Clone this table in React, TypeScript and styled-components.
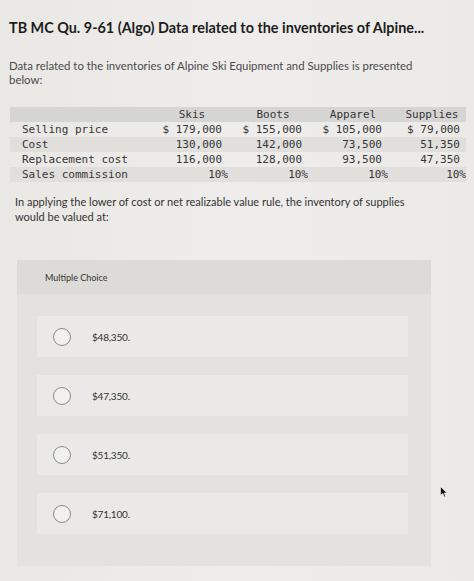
import React from "react";
import styled, { createGlobalStyle } from "styled-components";

const Global = createGlobalStyle`
  html, body { margin: 0; padding: 0; background: #ebeae7; }
  body { width: 474px; height: 581px; overflow: hidden; }
`;

const Page = styled.div`
  position: relative;
  width: 474px;
  height: 581px;
  box-sizing: border-box;
  padding: 19px 9px 0 9px;
  background: linear-gradient(90deg, #e9e8e5 0%, #eeedeb 50%, #ebeae7 100%);
  font-family: Lato, "Open Sans", sans-serif;
  color: #222;
`;

const Title = styled.h1`
  margin: 0;
  font-size: 14.4px;
  line-height: 18px;
  font-weight: 700;
  color: #1d1d1d;
  white-space: nowrap;
`;

const Desc = styled.p`
  margin: 22px 0 0 0;
  font-size: 11.4px;
  line-height: 14px;
  color: #4a4a4a;
  width: 420px;
`;

const Table = styled.div`
  margin: 20px 0 0 1px;
  width: 456px;
  display: grid;
  grid-template-columns: 136px 82px 80px 80px 78px;
  font-family: "DejaVu Sans Mono", "Liberation Mono", monospace;
  font-size: 11px;
  color: #363636;
`;

const Row = styled.div<{ $band?: "head" | "stripe" | "plain" }>`
  display: contents;
  & > div {
    background: ${(p) =>
      p.$band === "head" ? "#d5d5d4" : p.$band === "stripe" ? "#e0dfdc" : "transparent"};
  }
`;

const Cell = styled.div<{ $align?: "left" | "right" | "center"; $pct?: boolean }>`
  height: 15px;
  line-height: 15px;
  white-space: pre;
  text-align: ${(p) => p.$align ?? "right"};
  padding-left: ${(p) => (p.$align === "left" ? "12px" : p.$align === "center" ? "10px" : "0")};
  padding-right: ${(p) => (p.$pct ? "0" : p.$align === "center" ? "0" : "6px")};
`;

const Question = styled.p`
  margin: 12px 0 0 6px;
  font-size: 11px;
  line-height: 15px;
  color: #333;
  width: 400px;
`;

const Panel = styled.section`
  margin: 36px 0 0 8px;
  width: 414px;
  background: #e3e2df;
  padding-bottom: 32px;
`;

const PanelHead = styled.div`
  height: 34px;
  background: #dcdbd8;
  display: flex;
  align-items: center;
  padding-left: 28px;
  font-size: 9px;
  color: #333;
`;

const Options = styled.div`
  display: flex;
  flex-direction: column;
  gap: 18px;
  padding: 22px 0 0 20px;
`;

const Option = styled.label`
  width: 371px;
  height: 41px;
  background: #eae9e7;
  display: flex;
  align-items: center;
  padding-left: 16px;
  box-sizing: border-box;
  gap: 21px;
  font-size: 10px;
  color: #333;
  letter-spacing: -0.2px;
`;

const Radio = styled.span`
  width: 18px;
  height: 18px;
  box-sizing: border-box;
  border: 1.5px solid #8a8a8a;
  border-radius: 50%;
  background: #f1f1f0;
`;

const Cursor = styled.svg`
  position: absolute;
  left: 440px;
  top: 486px;
`;

const rows: { label: string; vals: string[]; band: "stripe" | "plain"; pct?: boolean }[] = [
  { label: "Selling price", vals: ["$ 179,000", "$ 155,000", "$ 105,000", "$ 79,000"], band: "plain" },
  { label: "Cost", vals: ["130,000", "142,000", "73,500", "51,350"], band: "stripe" },
  { label: "Replacement cost", vals: ["116,000", "128,000", "93,500", "47,350"], band: "plain" },
  { label: "Sales commission", vals: ["10%", "10%", "10%", "10%"], band: "stripe", pct: true },
];

const choices = ["$48,350.", "$47,350.", "$51,350.", "$71,100."];

export default function App() {
  return (
    <Page>
      <Global />
      <Title>TB MC Qu. 9-61 (Algo) Data related to the inventories of Alpine...</Title>
      <Desc>Data related to the inventories of Alpine Ski Equipment and Supplies is presented below:</Desc>
      <Table>
        <Row $band="head">
          <Cell $align="left"></Cell>
          <Cell $align="center">Skis</Cell>
          <Cell $align="center">Boots</Cell>
          <Cell $align="center">Apparel</Cell>
          <Cell $align="center">Supplies</Cell>
        </Row>
        {rows.map((r) => (
          <Row key={r.label} $band={r.band}>
            <Cell $align="left">{r.label}</Cell>
            {r.vals.map((v, i) => (
              <Cell key={i} $pct={r.pct}>{v}</Cell>
            ))}
          </Row>
        ))}
      </Table>
      <Question>
        In applying the lower of cost or net realizable value rule, the inventory of supplies would be valued at:
      </Question>
      <Panel>
        <PanelHead>Multiple Choice</PanelHead>
        <Options>
          {choices.map((c) => (
            <Option key={c}>
              <Radio />
              <span>{c}</span>
            </Option>
          ))}
        </Options>
      </Panel>
      <Cursor width="8" height="12" viewBox="0 0 8 12">
        <path d="M0.5 0.5 L0.5 9.5 L2.7 7.5 L4.3 11 L5.6 10.4 L4.1 7 L7 7 Z" fill="#111" stroke="#fff" strokeWidth="0.6" />
      </Cursor>
    </Page>
  );
}
